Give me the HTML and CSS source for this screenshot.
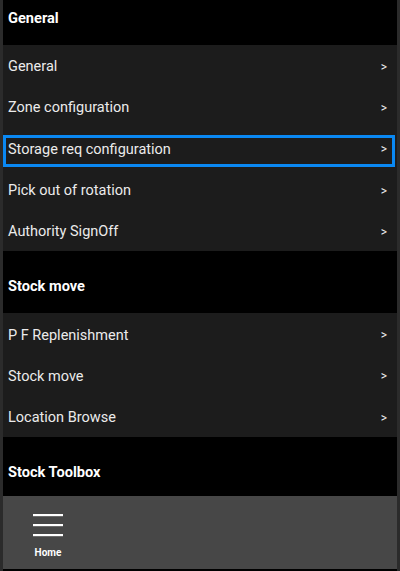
FILE: index.html
```html
<!DOCTYPE html>
<html>
<head>
<meta charset="utf-8">
<link rel="stylesheet" href="styles.css">
</head>
<body>
<div class="app">
  <div class="scroll">
    <div class="list">
      <div class="section-header">General</div>
      <div class="row"><span class="label">General</span><span class="chev">&gt;</span></div>
      <div class="row"><span class="label">Zone configuration</span><span class="chev">&gt;</span></div>
      <div class="row focused"><span class="label">Storage req configuration</span><span class="chev">&gt;</span></div>
      <div class="row"><span class="label">Pick out of rotation</span><span class="chev">&gt;</span></div>
      <div class="row"><span class="label">Authority SignOff</span><span class="chev">&gt;</span></div>
      <div class="section-header">Stock move</div>
      <div class="row"><span class="label">P F Replenishment</span><span class="chev">&gt;</span></div>
      <div class="row"><span class="label">Stock move</span><span class="chev">&gt;</span></div>
      <div class="row"><span class="label">Location Browse</span><span class="chev">&gt;</span></div>
      <div class="section-header">Stock Toolbox</div>
    </div>
  </div>
  <nav class="bottom-nav">
    <div class="nav-item">
      <svg class="menu-icon" width="32" height="24" viewBox="0 0 32 24">
        <rect x="1" y="1" width="30" height="2.2" fill="#ffffff"/>
        <rect x="1" y="11" width="30" height="2.2" fill="#ffffff"/>
        <rect x="1" y="21" width="30" height="2.2" fill="#ffffff"/>
      </svg>
      <span class="nav-label">Home</span>
    </div>
  </nav>
</div>
</body>
</html>
```
FILE: styles.css
```css
html, body {
  margin: 0;
  padding: 0;
}
body {
  width: 400px;
  height: 571px;
  overflow: hidden;
  background: #2b2b2b;
  font-family: Roboto, "Noto Sans", "Liberation Sans", sans-serif;
}
.app {
  box-sizing: border-box;
  height: 571px;
  margin: 0 3px 0 3px;
  padding-bottom: 2px;
  display: flex;
  flex-direction: column;
  background: #000000;
}
.scroll {
  flex: 1;
  overflow: hidden;
  min-height: 0;
}
.list {
  margin-top: -17px;
}
.section-header {
  box-sizing: border-box;
  height: 62px;
  padding: 8px 0 0 5px;
  display: flex;
  align-items: center;
  background: #000000;
  color: #ffffff;
  font-weight: 700;
  font-size: 14.6px;
}
.row {
  position: relative;
  box-sizing: border-box;
  height: 41.3px;
  padding: 2px 10px 0 5px;
  display: flex;
  align-items: center;
  justify-content: space-between;
  background: #1c1c1c;
  color: #ebebeb;
  font-size: 14.5px;
}
.chev {
  font-size: 12px;
  color: #f0f0f0;
}
.focused::after {
  content: "";
  position: absolute;
  left: 0;
  right: 2px;
  top: 7px;
  bottom: 2px;
  border: 3px solid #0a88f2;
  box-sizing: border-box;
}
.bottom-nav {
  height: 73px;
  flex: none;
  background: #474747;
  display: flex;
  align-items: flex-start;
}
.nav-item {
  width: 90px;
  display: flex;
  flex-direction: column;
  align-items: center;
  padding-top: 17px;
}
.menu-icon {
  display: block;
}
.nav-label {
  margin-top: 10px;
  color: #ffffff;
  font-size: 10px;
  font-weight: 700;
}
```
